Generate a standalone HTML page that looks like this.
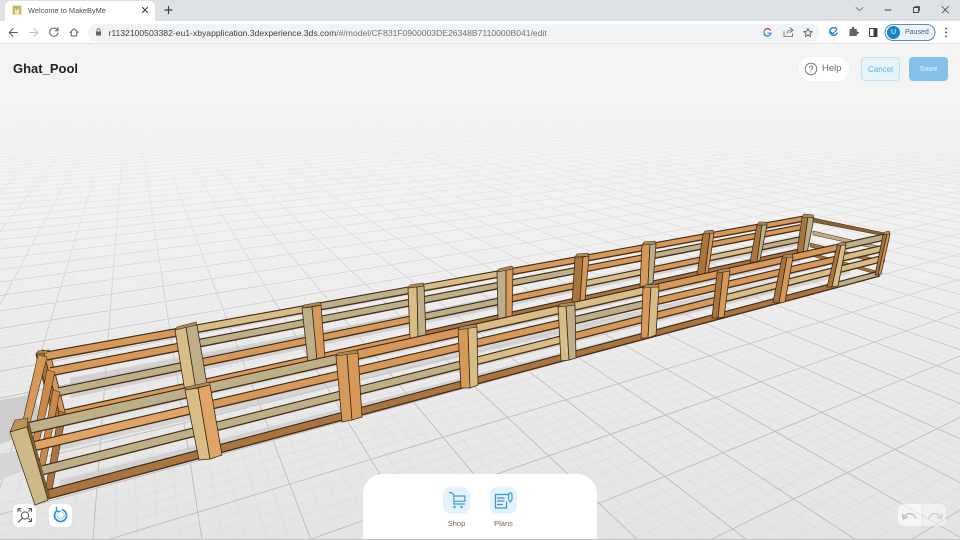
<!DOCTYPE html>
<html><head><meta charset="utf-8"><title>Welcome to MakeByMe</title>
<style>
html,body{margin:0;padding:0;width:960px;height:540px;overflow:hidden;background:#f4f4f4;font-family:"Liberation Sans",sans-serif}
.a{position:absolute}
svg{position:absolute;left:0;top:0;display:block}
</style></head><body>
<svg id="scene" width="960" height="540" viewBox="0 0 960 540">
<defs>
<linearGradient id="g" x1="0" y1="0" x2="0" y2="1"><stop offset="0" stop-color="#f5f5f5"/><stop offset=".4" stop-color="#f3f3f3"/><stop offset=".65" stop-color="#ebebeb"/><stop offset="1" stop-color="#e4e4e4"/></linearGradient>
<linearGradient id="gm" gradientUnits="userSpaceOnUse" x1="0" y1="130" x2="0" y2="450"><stop offset="0" stop-color="#dcdcdc" stop-opacity="0"/><stop offset=".25" stop-color="#dcdcdc" stop-opacity=".1"/><stop offset=".55" stop-color="#dcdcdc" stop-opacity=".35"/><stop offset="1" stop-color="#d8d8d8" stop-opacity=".85"/></linearGradient>
<linearGradient id="gM" gradientUnits="userSpaceOnUse" x1="0" y1="100" x2="0" y2="420"><stop offset="0" stop-color="#c6c6c6" stop-opacity="0"/><stop offset=".16" stop-color="#c6c6c6" stop-opacity=".15"/><stop offset=".47" stop-color="#c4c4c4" stop-opacity=".45"/><stop offset=".78" stop-color="#c0c0c0" stop-opacity=".85"/><stop offset="1" stop-color="#bcbcbc" stop-opacity="1"/></linearGradient>
</defs>
<rect width="960" height="540" fill="url(#g)"/>
<path id="minor" fill="none" stroke="url(#gm)" stroke-width=".55"/>
<path id="major" fill="none" stroke="url(#gM)" stroke-width=".9"/>
<g id="shadow" fill="#c6c6c6"></g>
<g id="fence"></g>
</svg>

<!-- Browser chrome -->
<div class="a" style="left:0;top:0;width:960px;height:21px;background:#dee1e6"></div>
<div class="a" style="left:5px;top:1px;width:150px;height:21px;background:#fff;border-radius:6px 6px 0 0"></div>
<div class="a" style="left:0;top:21px;width:960px;height:23px;background:#fff;border-bottom:1px solid #e4e4e4;box-sizing:border-box"></div>
<div class="a" style="left:88px;top:23.5px;width:732px;height:18px;background:#f1f3f4;border-radius:9px"></div>
<div class="a" style="left:28px;top:4.5px;font-size:7.4px;line-height:12px;color:#4a4d52;white-space:nowrap">Welcome to MakeByMe</div>
<div class="a" style="left:108.5px;top:26.5px;font-size:8.6px;line-height:12px;color:#3c4043;white-space:nowrap">r1132100503382-eu1-xbyapplication.3dexperience.3ds.com<span style="color:#70757a">/#/model/CF831F0900003DE26348B7110000B041/edit</span></div>
<svg width="960" height="45" viewBox="0 0 960 45" fill="none" stroke-linecap="round" stroke-linejoin="round">
<rect x="12" y="5" width="10" height="10" fill="#f6e6a4"/><path d="M14 14V7h6v7M16 9h2" stroke="#8a7a5a" stroke-width=".9"/>
<path d="M142.5 7.5l5 5M147.5 7.5l-5 5" stroke="#3c4043" stroke-width="1.1"/>
<path d="M168.5 6.5v7M165 10h7" stroke="#3c4043" stroke-width="1.2"/>
<path d="M856 7.5l3.5 3 3.5-3" stroke="#5f6368" stroke-width=".8"/>
<path d="M885 10h6" stroke="#3c4043" stroke-width=".9"/>
<rect x="913.5" y="7.5" width="5" height="5" stroke="#3c4043" stroke-width=".9"/><path d="M915 6.5h4.5v4.5" stroke="#3c4043" stroke-width=".8"/>
<path d="M942 6.5l6.5 6.5M948.5 6.5l-6.5 6.5" stroke="#3c4043" stroke-width=".8"/>
<path d="M9.5 32.5h8M13 28.5l-3.8 4 3.8 4" stroke="#5f6368" stroke-width="1"/>
<path d="M37.5 32.5h-8M34 28.5l3.8 4-3.8 4" stroke="#bcc0c4" stroke-width="1"/>
<path d="M57.5 30a4.2 4.2 0 1 0 .5 3M58 27.8v3h-3" stroke="#5f6368" stroke-width="1"/>
<path d="M70 32.5l4-3.7 4 3.7M71.3 32v4h5.4v-4" stroke="#5f6368" stroke-width="1"/>
<rect x="96" y="31.5" width="5" height="4" fill="#5f6368"/><path d="M97 31.5v-1.3a1.5 1.5 0 0 1 3 0v1.3" stroke="#5f6368" stroke-width=".8"/>
<path d="M770.5 30.2a3.6 3.6 0 1 0 .6 3h-3" stroke="#4285f4" stroke-width="1.2"/><path d="M765 29.5a3.6 3.6 0 0 1 5.2.4" stroke="#ea4335" stroke-width="1.2"/><path d="M764.2 34.5a3.6 3.6 0 0 0 5 1" stroke="#34a853" stroke-width="1.2"/>
<path d="M784 31.5v5h8.5v-3M787 33.5c.5-2.5 2.3-3.6 4.6-3.6M790 27.8l3 2.4-3 2.3" stroke="#5f6368" stroke-width=".8"/>
<path d="M808 28.5l1.3 2.8 3 .3-2.3 2 .7 3-2.7-1.6-2.7 1.6.7-3-2.3-2 3-.3z" stroke="#5f6368" stroke-width=".9"/>
<path d="M836.5 29a3.8 3.8 0 1 0 .6 4" stroke="#1a8fdc" stroke-width="1.5"/><path d="M831 32l2 1.7 3.5-3.7" stroke="#2f5f9a" stroke-width="1"/>
<path d="M849.5 30.5h2.3v-1a1.2 1.2 0 0 1 2.4 0v1h2.6v2.6h1a1.2 1.2 0 0 1 0 2.4h-1v2h-7.3z" fill="#5f6368" transform="translate(0 -1.5)"/>
<rect x="869.5" y="28.5" width="7.5" height="8" stroke="#3c4043" stroke-width="1"/><rect x="873.5" y="28.5" width="3.5" height="8" fill="#3c4043"/>
<rect x="885" y="24.5" width="50" height="16" rx="8" fill="#eef3f9" stroke="#2f6ba8" stroke-width=".8"/>
<circle cx="893.5" cy="32.5" r="6.5" fill="#1487d0"/>
<circle cx="946" cy="28.5" r=".9" fill="#3c4043"/><circle cx="946" cy="32.5" r=".9" fill="#3c4043"/><circle cx="946" cy="36.5" r=".9" fill="#3c4043"/>
</svg>
<div class="a" style="left:890px;top:26.5px;font-size:7px;line-height:12px;color:#fff;width:7px;text-align:center">U</div>
<div class="a" style="left:905px;top:27px;font-size:7px;line-height:12px;color:#41658c;white-space:nowrap">Paused</div>

<!-- App UI -->
<div class="a" style="left:13px;top:61px;font-size:13px;line-height:16px;font-weight:700;color:#222;white-space:nowrap">Ghat_Pool</div>
<div class="a" style="left:799px;top:57px;width:50px;height:24px;background:#fff;border-radius:12px"></div>
<svg width="960" height="90" viewBox="0 0 960 90" style="pointer-events:none" fill="none">
<circle cx="811" cy="69" r="5.8" stroke="#6a6a6a" stroke-width=".9"/>
<path d="M809.4 67.6a1.7 1.7 0 1 1 2.4 1.6c-.6.3-.8.6-.8 1.2" stroke="#6a6a6a" stroke-width=".8"/><circle cx="811" cy="71.8" r=".5" fill="#6a6a6a"/>
</svg>
<div class="a" style="left:822px;top:63px;font-size:9.5px;line-height:12px;color:#6c6c6c">Help</div>
<div class="a" style="left:861px;top:57px;width:39px;height:24px;box-sizing:border-box;background:#e6f3fb;border:1px solid #bfe1f3;border-radius:4px;font-size:8px;line-height:23px;text-align:center;color:#5fafdc">Cancel</div>
<div class="a" style="left:909px;top:57px;width:39px;height:24px;background:#84c1e8;border-radius:4px;font-size:7.5px;font-weight:700;line-height:24px;text-align:center;color:#d6ebf8">Save</div>

<div class="a" style="left:363px;top:474px;width:234px;height:66px;background:#fff;border-radius:20px 20px 0 0"></div>
<div class="a" style="left:443px;top:487px;width:27px;height:27px;background:#e3f2fb;border-radius:8px"></div>
<div class="a" style="left:490px;top:487px;width:27px;height:27px;background:#e3f2fb;border-radius:8px"></div>
<div class="a" style="left:443px;top:519px;width:27px;text-align:center;font-size:7.5px;line-height:10px;color:#6a6a6a">Shop</div>
<div class="a" style="left:490px;top:519px;width:27px;text-align:center;font-size:7.5px;line-height:10px;color:#6a6a6a">Plans</div>
<div class="a" style="left:13px;top:504px;width:23px;height:23px;background:#fff;border-radius:6px"></div>
<div class="a" style="left:49px;top:504px;width:23px;height:23px;background:#fff;border-radius:6px"></div>
<div class="a" style="left:898px;top:504px;width:24px;height:22px;background:rgba(255,255,255,.62);border-radius:6px 0 0 6px"></div>
<div class="a" style="left:923px;top:504px;width:23px;height:22px;background:rgba(255,255,255,.45);border-radius:0 6px 6px 0"></div>
<div class="a" style="left:0;top:539px;width:960px;height:1px;background:#c4c4c4"></div>
<svg width="960" height="540" viewBox="0 0 960 540" fill="none" stroke-linecap="round" stroke-linejoin="round" style="pointer-events:none">
<path d="M449.5 492.5h2.2l2.2 2.8v8.7h10.6M453.9 496h11v5.3H454" stroke="#3f9bd2" stroke-width="1.2"/>
<circle cx="454.5" cy="507" r="1.2" fill="#3f9bd2"/><circle cx="461.5" cy="507" r="1.2" fill="#3f9bd2"/>
<path d="M507.5 494.5h-12v13.5h11v-6M497.5 498h6.5M497.5 501h6.5M497.5 504.5h5" stroke="#3f8fc8" stroke-width="1.2"/>
<path d="M508.5 494l2-1.5 1.5 1.5v5.5l-1.7 2.5-1.8-2.5z" stroke="#3f9bd2" stroke-width="1.2"/>
<circle cx="25" cy="515.5" r="3.6" stroke="#555" stroke-width="1"/><path d="M22.4 518.2l-4 4" stroke="#555" stroke-width="1.1"/>
<path d="M18 511.5v-3h3M18.2 508.7l2.6 2.6M31.5 511.5v-3h-3M31.3 508.7l-2.6 2.6M31.5 518.5v3h-3M31.3 521.3l-2.6-2.6" stroke="#555" stroke-width="1"/>
<circle cx="60.5" cy="515.5" r="6" stroke="#2f9ad6" stroke-width="1.8" stroke-dasharray="30 8" transform="rotate(-70 60.5 515.5)"/>
<path d="M58.5 512.5a3.6 3.6 0 1 0 4.2-.1" stroke="#8cc8ea" stroke-width="1"/>
<path d="M56.5 507.5v3.8h3.6" stroke="#2f9ad6" stroke-width="1.4"/>
<path d="M903.5 519c.6-3.5 3.3-5.4 6-5.4 2.6 0 5 1.5 6.3 4.5M902.5 514.5l.9 4.5 4-2" stroke="#bdbdbd" stroke-width="1.4"/>
<path d="M941 519c-.6-3.5-3.3-5.4-6-5.4-2.6 0-5 1.5-6.3 4.5M942 514.5l-.9 4.5-4-2" stroke="#cfcfcf" stroke-width="1.4"/>
</svg>

<script>
(function(){
var NS='http://www.w3.org/2000/svg';
var mi='',ma='',k,x;
for(k=-500;k<=700;k++){x=93+21.8*k;var s='M129 62L'+x+' 540';if(k%5==0)ma+=s;else mi+=s;}
for(k=-700;k<=40;k++){x=107+40.2*k;var u='M1710 50L'+x+' 540';if(k%5==0)ma+=u;else mi+=u;}
document.getElementById('minor').setAttribute('d',mi);
document.getElementById('major').setAttribute('d',ma);
var F=document.getElementById('fence'),S=document.getElementById('shadow');
var C={o:'#d6995a',O:'#c98b4b',t:'#d8bd86',k:'#bdaf87',b:'#a9743f',p:'#e0a566',d:'#a8753f'};
function poly(pts,fill,par,st,sw,op){var e=document.createElementNS(NS,'polygon');e.setAttribute('points',pts.map(function(p){return p.join(',')}).join(' '));e.setAttribute('fill',fill);if(st){e.setAttribute('stroke',st);e.setAttribute('stroke-width',sw||.7);e.setAttribute('stroke-linejoin','round');}if(op)e.setAttribute('opacity',op);(par||F).appendChild(e);}
function ln(a,b,c,w){var e=document.createElementNS(NS,'line');e.setAttribute('x1',a[0]);e.setAttribute('y1',a[1]);e.setAttribute('x2',b[0]);e.setAttribute('y2',b[1]);e.setAttribute('stroke',c);e.setAttribute('stroke-width',w);F.appendChild(e);}
function rail(r,xs,cols){var x0=r[0],a0=r[1],b0=r[2],x1=r[3],a1=r[4],b1=r[5];
 function at(x){var t=(x-x0)/(x1-x0);return [a0+(a1-a0)*t,b0+(b1-b0)*t];}
 for(var i=0;i<xs.length-1;i++){var p=Math.max(xs[i],x0),q=Math.min(xs[i+1],x1);var A=at(p),B=at(q);
  poly([[p,A[0]],[q,B[0]],[q,B[1]],[p,A[1]]],C[cols[i]]);}
 ln([x0,a0-.2],[x1,a1-.2],'#3b2a17',1.1);
 ln([x0,b0],[x1,b1],'#4a3019',1.4);
}
function post(tops,bots,cols){
 for(var i=0;i<tops.length-1;i++){poly([tops[i],tops[i+1],bots[i+1],bots[i]],C[cols[i]],F,'#3b2a17',.8);}
 var a=tops[0],b=tops[tops.length-1];
 poly([a,[a[0]+2,a[1]-3],[b[0]-1,b[1]-3],b],'#a98a58',F,'#3b2a17',.6);
}
function strip(x0,a0,b0,x1,a1,b1,op){poly([[x0,a0],[x1,a1],[x1,b1],[x0,b0]],'#c8c8c8',S,null,0,op||.85);}
/* shadows */
poly([[0,400],[35,394],[42,428],[12,440],[0,444]],'#cdcdcd',S);
poly([[0,454],[26,449],[30,468],[0,480]],'#d6d6d6',S);
strip(70,378,398,800,240,245,.7);
strip(60,418,428,800,258,262,.7);
strip(60,440,450,830,268,272,.6);
strip(60,462,470,850,270,274,.7);
strip(60,480,488,870,274,277,.7);
/* back fence */
var bx=[47,180,310,415,505,582,650,708,760,805];
poly([[36,355],[43,351],[60,420],[54,422]],C.O,F,'#3b2a17',.6);
post([[36,354],[43,350],[50,353]],[[56,420],[61,419],[66,416]],['d','o']);
rail([47,352,360,805,216,221],bx,'otktooooo');
rail([50,368,376,800,225,230],bx,'okkkkokoo');
rail([58,388,396,800,237,242],bx,'kookototk');
rail([65,410,418,800,249,254],bx,'ooobbbbbb');
var bp=[
[[[175,330],[186,327],[197,325]],[[185,392],[196,390],[207,385]],'tk'],
[[[302,308],[312,307],[321,305]],[[308,362],[317,360],[325,358]],'ko'],
[[[408,288],[417,287],[424,286]],[[410,339],[418,338],[426,336]],'tk'],
[[[497,272],[506,270],[513,269]],[[498,320],[506,319],[512,317]],'ko'],
[[[575,257],[583,257],[589,256]],[[572,303],[580,302],[585,300]],'do'],
[[[642,245],[650,244],[656,244]],[[640,287],[648,285],[653,283]],'ok'],
[[[703,234],[710,233],[714,233]],[[697,275],[705,274],[708,273]],'do'],
[[[757,225],[762,225],[767,225]],[[750,262],[757,262],[760,260]],'dk'],
[[[802,217],[808,217],[814,218]],[[797,252],[803,253],[807,253]],'dk']];
bp.forEach(function(p){post(p[0],p[1],p[2]);});
/* right end rails */
[[[813,218],[885,233],[885,236],[813,222],'#8a5f33'],[[813,231],[882,247],[882,250],[813,235],'#bdaf87'],[[810,243],[880,260],[880,263],[810,247],'#a9743f'],[[808,252],[876,271],[876,274],[808,255],'#a9743f']].forEach(function(r){poly(r.slice(0,4),r[4],F,'#3b2a17',.5);});
/* left end rails */
poly([[22,425],[30,423],[47,357],[38,355]],C.o,F,'#3b2a17',.6);
poly([[32,445],[39,443],[55,372],[47,370]],C.O,F,'#3b2a17',.6);
poly([[38,468],[45,466],[60,392],[53,390]],C.O,F,'#3b2a17',.6);
poly([[45,492],[52,490],[66,413],[59,411]],C.d,F,'#3b2a17',.6);
/* front fence */
var fx=[27,190,340,460,560,645,720,785,835,885];
rail([27,423,434,885,234,240],fx,'kkottoook');
rail([33,442,451,885,245,251],fx,'poookooot');
rail([42,466,475,885,255,261],fx,'kkktoottt');
rail([48,490,499,880,271,276],fx,'bbbbbbbbk');
var fp=[
[[[185,390],[198,388],[210,385]],[[199,460],[210,459],[222,455]],'tp'],
[[[336,356],[347,354],[358,353]],[[342,422],[352,420],[362,417]],'oo'],
[[[458,330],[468,328],[477,327]],[[461,388],[470,388],[478,385]],'ot'],
[[[558,307],[566,306],[575,305]],[[561,361],[569,360],[576,358]],'tk'],
[[[643,288],[651,287],[659,287]],[[641,338],[648,338],[656,335]],'ot'],
[[[717,273],[723,272],[730,271]],[[712,318],[718,318],[724,317]],'do'],
[[[782,258],[787,257],[793,257]],[[773,302],[779,303],[785,302]],'do'],
[[[837,246],[841,245],[846,245]],[[827,287],[832,287],[838,286]],'dt'],
[[[883,235],[887,234],[890,234]],[[875,275],[878,275],[881,274]],'do']];
fp.forEach(function(p){post(p[0],p[1],p[2]);});
/* front-left corner post */
poly([[10,432],[15,420],[28,418],[27,427]],'#b8935a',F,'#3b2a17',.6);
poly([[27,427],[29,423],[50,498],[48,500]],'#7a5f33',F,'#3b2a17',.4);
poly([[10,432],[27,427],[48,500],[35,505]],'#cdb887',F,'#3b2a17',.7);
})();
</script>
</body></html>
